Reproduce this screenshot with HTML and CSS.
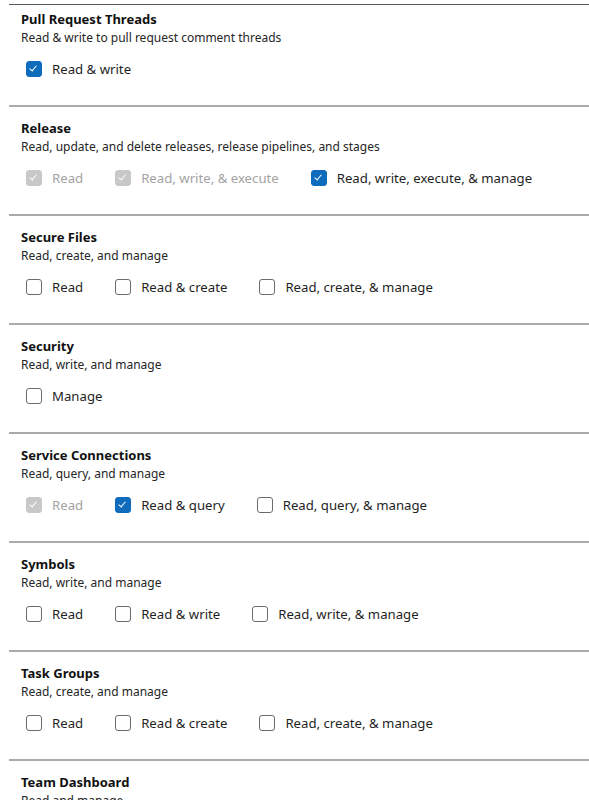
FILE: index.html
```html
<!DOCTYPE html>
<html>
<head>
<meta charset="utf-8">
<link rel="stylesheet" href="styles.css">
</head>
<body>
<div class="page">
  <section class="group group-first">
    <div class="title">Pull Request Threads</div>
    <div class="desc">Read &amp; write to pull request comment threads</div>
    <div class="options">
      <label class="opt"><span class="box checked"></span><span class="lbl">Read &amp; write</span></label>
    </div>
  </section>
  <section class="group">
    <div class="title">Release</div>
    <div class="desc">Read, update, and delete releases, release pipelines, and stages</div>
    <div class="options">
      <label class="opt disabled"><span class="box checked"></span><span class="lbl">Read</span></label>
      <label class="opt disabled"><span class="box checked"></span><span class="lbl">Read, write, &amp; execute</span></label>
      <label class="opt"><span class="box checked"></span><span class="lbl">Read, write, execute, &amp; manage</span></label>
    </div>
  </section>
  <section class="group">
    <div class="title">Secure Files</div>
    <div class="desc">Read, create, and manage</div>
    <div class="options">
      <label class="opt"><span class="box"></span><span class="lbl">Read</span></label>
      <label class="opt"><span class="box"></span><span class="lbl">Read &amp; create</span></label>
      <label class="opt"><span class="box"></span><span class="lbl">Read, create, &amp; manage</span></label>
    </div>
  </section>
  <section class="group">
    <div class="title">Security</div>
    <div class="desc">Read, write, and manage</div>
    <div class="options">
      <label class="opt"><span class="box"></span><span class="lbl">Manage</span></label>
    </div>
  </section>
  <section class="group">
    <div class="title">Service Connections</div>
    <div class="desc">Read, query, and manage</div>
    <div class="options">
      <label class="opt disabled"><span class="box checked"></span><span class="lbl">Read</span></label>
      <label class="opt"><span class="box checked"></span><span class="lbl">Read &amp; query</span></label>
      <label class="opt"><span class="box"></span><span class="lbl">Read, query, &amp; manage</span></label>
    </div>
  </section>
  <section class="group">
    <div class="title">Symbols</div>
    <div class="desc">Read, write, and manage</div>
    <div class="options">
      <label class="opt"><span class="box"></span><span class="lbl">Read</span></label>
      <label class="opt"><span class="box"></span><span class="lbl">Read &amp; write</span></label>
      <label class="opt"><span class="box"></span><span class="lbl">Read, write, &amp; manage</span></label>
    </div>
  </section>
  <section class="group">
    <div class="title">Task Groups</div>
    <div class="desc">Read, create, and manage</div>
    <div class="options">
      <label class="opt"><span class="box"></span><span class="lbl">Read</span></label>
      <label class="opt"><span class="box"></span><span class="lbl">Read &amp; create</span></label>
      <label class="opt"><span class="box"></span><span class="lbl">Read, create, &amp; manage</span></label>
    </div>
  </section>
  <section class="group">
    <div class="title">Team Dashboard</div>
    <div class="desc">Read and manage</div>
    <div class="options">
      <label class="opt"><span class="box"></span><span class="lbl">Read &amp; manage</span></label>
    </div>
  </section>
</div>
</body>
</html>
```
FILE: styles.css
```css
html, body {
  margin: 0;
  padding: 0;
  background: #ffffff;
  overflow: hidden;
}
body {
  font-family: "Noto Sans", "Open Sans", sans-serif;
  color: #1b1b1b;
  padding-top: 4px;
}
.page {
  margin-left: 9px;
  border-top: 1px solid #5a5a5a;
}
.group {
  border-top: 2px solid #ababab;
  padding: 12px 0 26px 12px;
}
.group-first {
  border-top: none;
  padding-top: 5px;
}
.title {
  font-size: 13px;
  font-weight: 700;
  line-height: 18px;
  color: #111;
}
.desc {
  font-size: 12px;
  line-height: 18px;
  padding-top: 1px;
  color: #262626;
}
.options {
  display: flex;
  gap: 32px;
  margin-top: 12px;
  padding-left: 5px;
  height: 20px;
  align-items: center;
}
.opt {
  display: flex;
  align-items: center;
  gap: 10px;
  font-size: 13.2px;
  color: #1f1f1f;
}
.box {
  width: 14px;
  height: 14px;
  border: 1px solid #6b6b6b;
  border-radius: 3px;
  background: #fff;
  position: relative;
  flex: none;
}
.box.checked {
  background: #0f6cbd;
  border-color: #0f6cbd;
}
.box.checked::after {
  content: "";
  position: absolute;
  left: 4px;
  top: 2px;
  width: 3px;
  height: 6px;
  border: solid #fff;
  border-width: 0 1.5px 1.5px 0;
  transform: rotate(40deg);
}
.opt.disabled {
  color: #a3a3a3;
}
.opt.disabled .box {
  background: #c8c8c8;
  border-color: #c8c8c8;
}
```
